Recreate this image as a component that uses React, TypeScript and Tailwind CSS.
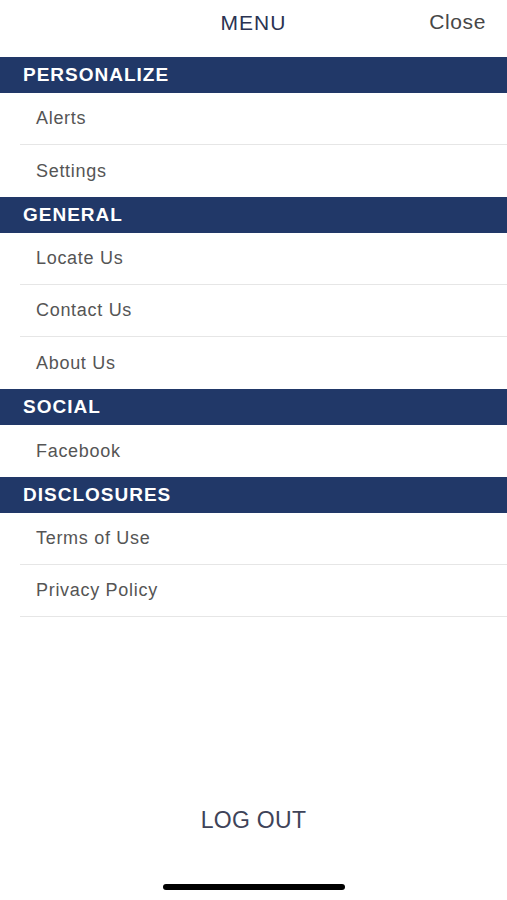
import React from 'react';

const sections = [
  { title: 'PERSONALIZE', items: ['Alerts', 'Settings'] },
  { title: 'GENERAL', items: ['Locate Us', 'Contact Us', 'About Us'] },
  { title: 'SOCIAL', items: ['Facebook'] },
  { title: 'DISCLOSURES', items: ['Terms of Use', 'Privacy Policy'] },
];

export default function App() {
  return (
    <div className="w-[507px] h-[900px] bg-white flex flex-col font-['Liberation_Sans',Arial,sans-serif]">
      {/* top bar */}
      <div className="h-[57px] relative flex items-center justify-center shrink-0">
        <span className="text-[21px] text-[#2b3352] tracking-[1px] -mt-[12px]">MENU</span>
        <span className="absolute right-[21px] top-[6px] text-[21px] tracking-[0.6px] text-[#474747]">Close</span>
      </div>

      {sections.map((section, si) => (
        <div key={section.title}>
          <div className="h-[36px] bg-[#213868] flex items-center pl-[23px]">
            <span className="text-white font-bold text-[19px] tracking-[1px]">{section.title}</span>
          </div>
          {section.items.map((item, i) => {
            const last = i === section.items.length - 1;
            const border = !last || si === sections.length - 1;
            return (
              <div key={item} className="pl-[20px]">
                <div className={`h-[52px] flex items-center pl-[16px] ${border ? 'border-b border-[#e6e6e6]' : ''}`}>
                  <span className="text-[18px] text-[#555555] tracking-[0.7px]">{item}</span>
                </div>
              </div>
            );
          })}
        </div>
      ))}

      <div className="flex-1" />

      <div className="flex justify-center pb-[47px]">
        <span className="text-[23px] tracking-[0.3px] text-[#3e4358]">LOG OUT</span>
      </div>
      <div className="flex justify-center pb-[10px]">
        <div className="w-[182px] h-[6px] rounded-full bg-black" />
      </div>
    </div>
  );
}
